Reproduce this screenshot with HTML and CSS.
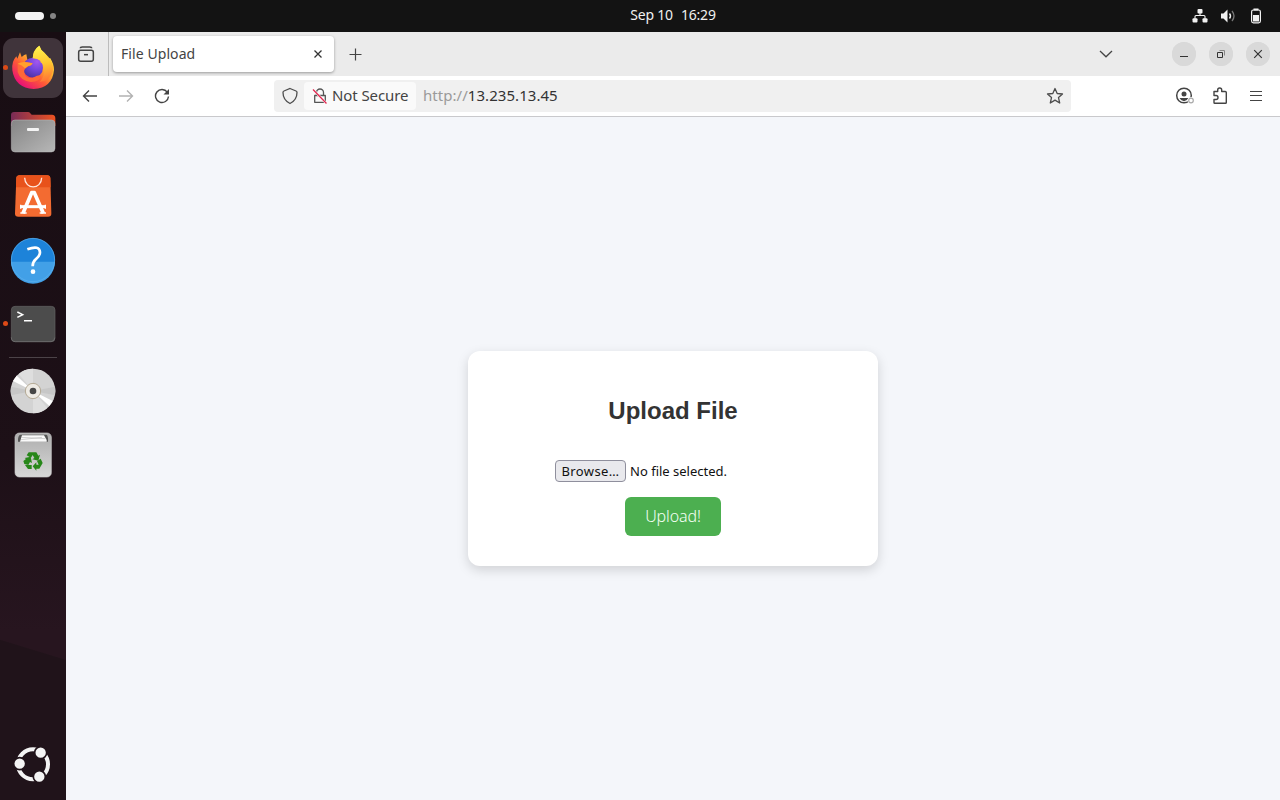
FILE: index.html
```html
<!DOCTYPE html>
<html lang="en">
<head>
<meta charset="utf-8">
<title>File Upload</title>
<link rel="stylesheet" href="styles.css">
</head>
<body>
<header class="topbar">
  <div class="workspaces"><span class="pill"></span><span class="dot"></span></div>
  <div class="clock"><span class="date">Sep 10</span><span class="time">16:29</span></div>
  <div class="status">
    <svg width="16" height="16" viewBox="0 0 16 16" fill="#f2f2f2"><rect x="5.5" y="1" width="5" height="4.4" rx="1"/><rect x="0.5" y="10.2" width="5" height="4.2" rx="1"/><rect x="10.500" y="10.200" width="5" height="4.200" rx="1"/><path d="M8 5v3M3 11V8.500q0-1 1-1h8q1 0 1 1V11" fill="none" stroke="#f2f2f2" stroke-width="1.100"/></svg>
    <svg width="16" height="16" viewBox="0 0 16 16"><path d="M1 5.500h2.500L7.500 1.500v13L3.500 10.500H1z" fill="#f2f2f2"/><path d="M9.500 5.500q2 2.500 0 5" fill="none" stroke="#f2f2f2" stroke-width="1.400"/><path d="M12 3q4 5 0 10" fill="none" stroke="#777" stroke-width="1.300"/></svg>
    <svg width="16" height="16" viewBox="0 0 16 16"><path d="M5.500 0.500h5v2h-5z" fill="#f2f2f2"/><rect x="3.600" y="2" width="8.800" height="12.800" rx="1.800" fill="none" stroke="#f2f2f2" stroke-width="1.200"/><path d="M5 7h6v6.500H5z" fill="#f2f2f2"/></svg>
  </div>
</header>
<div class="desktop">
<aside class="dock">
  <div class="app active running">
    <svg viewBox="9 114 180 180">
      <defs>
        <linearGradient id="flame" x1=".85" y1=".1" x2=".2" y2=".95"><stop offset="0" stop-color="#fff04a"/><stop offset=".35" stop-color="#ffb52c"/><stop offset=".62" stop-color="#ff5a36"/><stop offset="1" stop-color="#e60a7c"/></linearGradient>
        <radialGradient id="globe" cx=".7" cy=".2" r=".9"><stop offset="0" stop-color="#a357ef"/><stop offset=".5" stop-color="#7044da"/><stop offset="1" stop-color="#49319a"/></radialGradient>
        <linearGradient id="tail" x1=".5" y1="0" x2=".6" y2="1"><stop offset="0" stop-color="#fff34d"/><stop offset=".5" stop-color="#ffc630"/><stop offset="1" stop-color="#ff7137"/></linearGradient>
      </defs>
      <path d="M60 157L65 171Q73 163 79 163L82 179L98 180Q97 150 118 137Q122 151 133 158Q140 164 145 178L150 173Q163 194 162 210Q157 264 101 267Q45 264 37 211Q34 185 49 169L52 176Z" fill="url(#flame)"/>
      <circle cx="99" cy="203" r="30" fill="url(#globe)"/>
      <path d="M98 175Q100 149 118 137Q122 151 133 158Q162 183 159 213Q151 243 119 246Q134 231 133 208Q131 190 119 185L124 184Q112 175 98 175Z" fill="url(#tail)"/>
      <path d="M53 190Q67 182 81 187L98 190Q95 197 84 199L77 205Q69 211 75 224Q85 240 105 230Q116 224 123 229Q116 247 92 246Q61 242 53 216Z" fill="#ff6838"/>
      <path d="M53 191Q67 183 81 187L98 190Q95 197 84 199L75 205Q66 194 53 191Z" fill="#ffa02e"/>
    </svg>
  </div>
  <div class="app">
    <svg viewBox="9 6 180 180">
      <defs><linearGradient id="fback"><stop offset="0" stop-color="#782b57"/><stop offset="1" stop-color="#ef5321"/></linearGradient><linearGradient id="ffront" x1="0" y1="0" x2="1" y2="1"><stop offset="0" stop-color="#858585"/><stop offset="1" stop-color="#b7b7b7"/></linearGradient></defs>
      <path d="M33 78V45Q33 36 42 36H84Q88 36 91 40L95 44H156Q166 44 166 55V78Z" fill="url(#fback)"/>
      <rect x="34" y="60" width="131" height="96" rx="11" fill="url(#ffront)" stroke="#bcbcbc" stroke-width="1.500"/>
      <rect x="81" y="84" width="36" height="9" rx="3" fill="#f4f4f4"/>
    </svg>
  </div>
  <div class="app">
    <svg viewBox="9 198 180 180">
      <path d="M58 226H142Q150 226 151 234L154 341Q154 350 144 350H55Q45 350 45 341L49 234Q50 226 58 226Z" fill="#f36b31"/>
      <path d="M58 226H142Q150 226 151 234L152 262H48L49 234Q50 226 58 226Z" fill="#e8521b"/>
      <path d="M74 233C75 270 124 270 125 233" fill="none" stroke="#ffe7dc" stroke-width="4"/>
      <path d="M69 340L95 278H103L130 340" fill="none" stroke="#fff" stroke-width="11" stroke-linejoin="round"/><path d="M61 320H137" stroke="#fff" stroke-width="9"/>
      <path d="M62 314v12M136 314v12M61 339h19M119 339h19" stroke="#fff" stroke-width="4"/>
    </svg>
  </div>
  <div class="app">
    <svg viewBox="9 15 180 180">
      <circle cx="99" cy="105" r="66" fill="#1d83d9"/><path d="M33 110H165A66 66 0 0 1 33 110" fill="#42a0e7"/><circle cx="99" cy="105" r="65" fill="none" stroke="#5eb0ed" stroke-width="2"/>
      <path d="M82 73Q119 59 120 82Q120 93 107 103Q98 110 98 124" fill="none" stroke="#fff" stroke-width="8"/><circle cx="99" cy="140" r="7" fill="#fff"/>
    </svg>
  </div>
  <div class="app running">
    <svg viewBox="9 207 180 180">
      <rect x="34" y="244" width="131" height="106" rx="11" fill="#4c4c4c" stroke="#626262" stroke-width="2"/><path d="M34 337Q34 350 46 350H153Q164 350 164 338" fill="none" stroke="#777" stroke-width="2"/>
      <path d="M52 261L68 269L52 277M72 287H96" fill="none" stroke="#fff" stroke-width="4.500"/>
    </svg>
  </div>
  <div class="separator"></div>
  <div class="app">
    <svg viewBox="9 33 180 180">
      <circle cx="99" cy="123" r="67" fill="#d3d3d3"/>
      <path d="M99 123L56 72A67 67 0 0 1 99 56ZM99 123L142 174A67 67 0 0 1 99 190Z" fill="#dedede"/><path d="M99 123L33 110A67 67 0 0 0 33 136ZM99 123L165 110A67 67 0 0 1 165 136Z" fill="#c7c7c7"/>
      <path d="M99 123L39 93L50 77ZM99 123L148 168L158 153Z" fill="#fff"/>
      <circle cx="99" cy="123" r="23" fill="#eeebe5" stroke="#a99d86" stroke-width="2.500"/><circle cx="99" cy="123" r="10" fill="#464646"/>
    </svg>
  </div>
  <div class="app">
    <svg viewBox="9 225 180 180">
      <defs><linearGradient id="bin" x1="0" y1="0" x2="0" y2="1"><stop offset="0" stop-color="#adadad"/><stop offset="1" stop-color="#d7d7d7"/></linearGradient></defs>
      <rect x="45" y="249" width="109" height="132" rx="13" fill="url(#bin)" stroke="#cacaca" stroke-width="2"/>
      <path d="M54 275Q53 255 62 254H139Q145 255 144 275Z" fill="#555"/><path d="M60 275L66 256H132L140 270V275Z" fill="#fafafa"/><path d="M64 262L136 266M63 269L126 262" stroke="#aaa" stroke-width="1.500"/>
      <g fill="#278719"><path d="M86 307H109L115 317L120 314L115 332L97 328L103 324L98 315L93 323L80 316Z"/><path d="M74 324L92 320L96 339L90 336L85 345L73 342L70 333L78 327Z"/><path d="M75 345H95V357H84Z"/><path d="M111 333L122 326L128 339L118 356H109V362L98 349L109 337V344H116Z"/></g>
    </svg>
  </div>
  <div class="app launcher">
    <svg viewBox="9 345 180 180">
      <circle cx="99" cy="433" r="45" fill="none" stroke="#f4f4f4" stroke-width="12"/>
      <g fill="#f4f4f4" stroke="#20131a" stroke-width="5"><circle cx="122" cy="398" r="18"/><circle cx="59" cy="431" r="18"/><circle cx="118" cy="470" r="18"/></g>
    </svg>
  </div>
</aside>
<main class="browser">
  <div class="tabstrip">
    <div class="recent"><svg width="20" height="20" viewBox="30 36 60 60" fill="none" stroke="#444" stroke-width="4.500"><rect x="38" y="55" width="44" height="33" rx="6"/><path d="M43 49Q43 45 49 45H71Q77 45 77 49"/><path d="M54 68H66"/></svg></div>
    <div class="tab"><span>File Upload</span><svg width="10" height="10" viewBox="0 0 10 10"><path d="M1.500 1.500l7 7m0-7l-7 7" stroke="#333" stroke-width="1.300"/></svg></div>
    <svg class="newtab" width="13" height="13" viewBox="0 0 13 13"><path d="M6.500 0.500v12M0.500 6.500h12" stroke="#444" stroke-width="1.200"/></svg>
    <svg class="alltabs" width="14" height="14" viewBox="0 0 14 14"><path d="M1 4l6 5.800L13 4" fill="none" stroke="#444" stroke-width="1.300"/></svg>
    <div class="window-buttons">
      <span><svg viewBox="0 0 24 24"><path d="M8 14.500h8" stroke="#333"/></svg></span>
      <span><svg viewBox="0 0 24 24" fill="none"><path d="M8.500 10.500h5v5h-5z" stroke="#333"/><path d="M10.500 8.500h5v5" stroke="#888"/></svg></span>
      <span><svg viewBox="0 0 24 24"><path d="M8.200 8.200l7.600 7.600m0-7.600l-7.600 7.600" stroke="#333" stroke-width="1.200"/></svg></span>
    </div>
  </div>
  <div class="toolbar">
    <div class="navigation">
      <svg width="16" height="16" viewBox="0 0 16 16" fill="none" stroke="#444" stroke-width="1.400"><path d="M15 8H1.800M7 2.500L1.500 8 7 13.500"/></svg>
      <svg width="16" height="16" viewBox="0 0 16 16" fill="none" stroke="#b2b2b2" stroke-width="1.400"><path d="M1 8h13.200M9 2.500L14.500 8 9 13.500"/></svg>
      <svg width="16" height="16" viewBox="0 0 16 16"><path d="M13.300 4.200A6.500 6.500 0 1 0 14.500 8.500" fill="none" stroke="#444" stroke-width="1.400"/><path d="M15 1v5.500H9.500z" fill="#444"/></svg>
    </div>
    <div class="urlbar">
      <svg class="shield" width="16" height="18" viewBox="0 0 16 18"><path d="M8 1.500L14 4Q15 4.400 15 5.500C15 11 12 14.500 8 16.500C4 14.500 1 11 1 5.500Q1 4.400 2 4Z" fill="none" stroke="#4d4d4d" stroke-width="1.300"/></svg>
      <div class="security"><svg width="16" height="16" viewBox="0 0 16 16" fill="none"><path d="M2.700 7.500H13.300V14.300H2.700zM4.500 7V4.500a3.500 3.500 0 0 1 7 0V7" stroke="#555" stroke-width="1.300" stroke-linejoin="round"/><path d="M1 1.500L14.500 15.500" stroke="#fff" stroke-width="2.400"/><path d="M1 1.500L14.500 15.500" stroke="#e22850" stroke-width="1.300"/></svg><span>Not Secure</span></div>
      <span class="address"><span class="scheme">http://</span><span class="host">13.235.13.45</span></span>
      <svg class="star" width="18" height="18" viewBox="0 0 18 18"><path d="M9 1.500l2.200 5 5.300.5-4 3.600 1.200 5.400L9 13.100 4.300 16l1.200-5.400-4-3.600 5.300-.5z" fill="none" stroke="#4d4d4d" stroke-width="1.300" stroke-linejoin="round"/></svg>
    </div>
    <div class="tools">
      <svg width="20" height="20" viewBox="0 0 20 20"><circle cx="10" cy="9.500" r="7.300" fill="none" stroke="#444" stroke-width="1.500"/><circle cx="10" cy="8" r="2.500" fill="#444"/><path d="M5.500 12h9q-1.700 3.200-4.500 3.200T5.500 12" fill="#444"/><circle cx="17" cy="14.500" r="3.500" fill="#fff"/><circle cx="17" cy="14.500" r="2.300" fill="none" stroke="#aaa" stroke-width="1.200"/></svg>
      <svg width="20" height="20" viewBox="0 0 20 20"><path d="M4 5.500H7.700V4a2 2 0 0 1 4 0V5.500H15.200Q16.300 5.500 16.300 6.500V16.500Q16.300 17.300 15.500 17.300H4.700Q4 17.300 4 16.500V13.500H6a2 2 0 0 0 0-4H4z" fill="none" stroke="#444" stroke-width="1.400" stroke-linejoin="round"/></svg>
      <svg width="20" height="20" viewBox="0 0 20 20"><path d="M4 5.500h12M4 9.500h12M4 14.500h12" stroke="#444" stroke-width="1.200"/></svg>
    </div>
  </div>
  <section class="page">
    <div class="card">
      <h2>Upload File</h2>
      <div class="file-row"><button class="browse">Browse…</button><span class="filename">No file selected.</span></div>
      <button class="upload">Upload!</button>
    </div>
  </section>
</main>
</div>
</body>
</html>
```
FILE: styles.css
```css
* { box-sizing: border-box; }
body { margin: 0; width: 1280px; height: 800px; overflow: hidden; display: flex; flex-direction: column; font-family: "Noto Sans", sans-serif; color: #444; }
svg { display: block; flex: none; }
button { font-family: inherit; margin: 0; padding: 0; }
.topbar { height: 32px; background: #131313; display: grid; grid-template-columns: 1fr auto 1fr; align-items: center; color: #f0f0f0; }
.workspaces { display: flex; align-items: center; gap: 6px; padding-left: 15px; }
.pill { width: 29px; height: 8px; border-radius: 4px; background: #f4f4f4; }
.dot { width: 6px; height: 6px; border-radius: 50%; background: #858585; }
.clock { display: flex; gap: 8px; font-size: 14px; line-height: 20px; padding: 0 0 2px 66px; letter-spacing: -.2px; }
.status { display: flex; justify-content: flex-end; gap: 12px; padding-right: 16px; }
.desktop { flex: 1; display: flex; min-height: 0; }
.dock { width: 66px; padding: 6px 3px 5px; display: flex; flex-direction: column; gap: 4px; background: linear-gradient(197deg, transparent 600px, #20131a 601px), linear-gradient(#180d13, #1d1017 55%, #27151f 78%); }
.app { position: relative; width: 60px; height: 60px; flex: none; }
.app svg { width: 60px; height: 60px; }
.active { background: #40343b; border-radius: 11px; }
.running::before { content: ""; position: absolute; left: 0; top: 27px; width: 5px; height: 5px; border-radius: 50%; background: #dc4a17; }
.separator { height: 1px; flex: none; background: #4c4348; margin: -1px 6px; }
.launcher { margin-top: auto; }
.browser { flex: 1; display: flex; flex-direction: column; min-width: 0; }
.tabstrip { height: 44px; background: #ebebeb; display: flex; align-items: center; }
.recent { width: 43px; height: 44px; border-right: 1px solid #bcbcbc; padding: 12px 10px; }
.tab { width: 221px; height: 36px; margin-left: 4px; padding: 0 11px 0 8px; background: #fff; border-radius: 4px; box-shadow: 0 1px 3px rgba(0,0,0,.35); display: flex; align-items: center; justify-content: space-between; font-size: 14px; }
.tab span { padding-bottom: 1px; letter-spacing: .08px; }
.newtab { margin-left: 15px; margin-top: 1px; }
.alltabs { margin-left: auto; }
.window-buttons { display: flex; gap: 13px; margin: 0 10px 0 59px; }
.window-buttons span, .window-buttons svg { width: 24px; height: 24px; border-radius: 50%; background: #d9d9d9; }
.toolbar { height: 41px; background: #fff; border-bottom: 1px solid #c9c9cc; display: flex; align-items: center; }
.navigation { display: flex; gap: 20px; padding-left: 16px; width: 208px; }
.urlbar { width: 797px; height: 32px; background: #f0f0f0; border-radius: 4px; display: flex; align-items: center; padding: 0 7px 0 8px; font-size: 15px; }
.security { width: 112px; height: 28px; margin-left: 6px; border-radius: 4px; background: #fafafa; display: flex; align-items: center; gap: 4px; padding-left: 8px; white-space: nowrap; }
.security span { padding-bottom: 2px; letter-spacing: -.1px; }
.address { margin-left: 7px; padding-bottom: 2px; letter-spacing: .05px; }
.scheme { color: #9a9a9a; }
.host { color: #333; }
.star { margin-left: auto; }
.tools { display: flex; gap: 16px; margin-left: 103px; }
.page { flex: 1; display: flex; align-items: center; justify-content: center; background: #f4f6fa; }
.card { width: 410px; height: 215px; padding: 30px; border-radius: 12px; background: #fff; box-shadow: 0 4px 12px rgba(0,0,0,.15); display: flex; flex-direction: column; align-items: center; }
h2 { margin: 16px 0 35px; font: bold 24px/28px "Liberation Sans", Arial, sans-serif; color: #333; }
.file-row { width: 236px; height: 22px; display: flex; align-items: center; gap: 4px; font-size: 13px; color: #111; white-space: nowrap; }
.browse { width: 71px; height: 22px; border: 1px solid #8f8f9d; border-radius: 4px; background: #e9e9ed; color: #111; font-size: 13px; letter-spacing: .4px; }
.upload { width: 96px; height: 39px; margin-top: 15px; padding-bottom: 2px; border: 0; border-radius: 6px; background: #4caf50; color: #f4fff4; font-size: 16px; font-weight: 300; letter-spacing: -.1px; }
```
